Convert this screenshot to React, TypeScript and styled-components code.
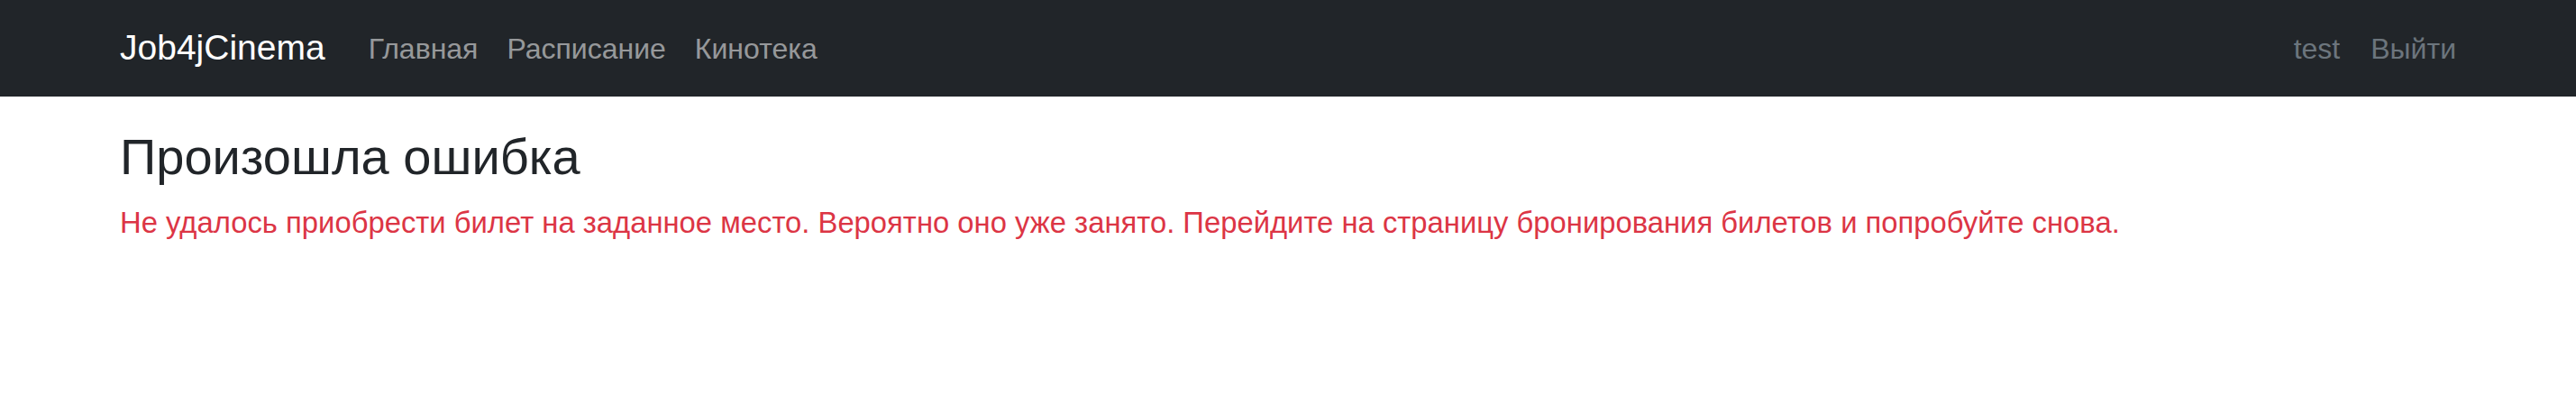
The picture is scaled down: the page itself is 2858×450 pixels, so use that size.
import React from "react";
import styled, { createGlobalStyle } from "styled-components";

const GlobalStyle = createGlobalStyle`
  * {
    box-sizing: border-box;
  }
  body {
    margin: 0;
    background: #fff;
    font-family: "Liberation Sans", Arial, sans-serif;
    color: #212529;
  }
`;

const links = ["Главная", "Расписание", "Кинотека"];

export default function App() {
  return (
    <>
      <GlobalStyle />
      <Navbar>
        <NavContainer>
          <Brand href="#">Job4jCinema</Brand>
          <NavList>
            {links.map((link) => (
              <NavLink key={link} href="#">
                {link}
              </NavLink>
            ))}
          </NavList>
          <UserNav>
            <UserLink href="#">test</UserLink>
            <UserLink href="#">Выйти</UserLink>
          </UserNav>
        </NavContainer>
      </Navbar>
      <Main>
        <Title>Произошла ошибка</Title>
        <ErrorText>
          Не удалось приобрести билет на заданное место. Вероятно оно уже
          занято. Перейдите на страницу бронирования билетов и попробуйте снова.
        </ErrorText>
      </Main>
    </>
  );
}

const Navbar = styled.nav`
  background: #212529;
  height: 107px;
`;

const Container = styled.div`
  max-width: 2640px;
  margin: 0 auto;
  padding: 0 24px;
`;

const NavContainer = styled(Container)`
  display: flex;
  align-items: center;
  height: 100%;
`;

const Brand = styled.a`
  font-size: 39px;
  color: #fff;
  text-decoration: none;
  margin-right: 32px;
  line-height: 1.5;
`;

const NavList = styled.div`
  display: flex;
  align-items: center;
`;

const NavLink = styled.a`
  font-size: 32px;
  line-height: 1.5;
  padding: 0 16px;
  color: rgba(255, 255, 255, 0.55);
  text-decoration: none;
`;

const UserNav = styled.div`
  display: flex;
  align-items: center;
  gap: 34px;
  margin-left: auto;
`;

const UserLink = styled.a`
  font-size: 32px;
  line-height: 1.5;
  color: #6c757d;
  text-decoration: none;
`;

const Main = styled(Container)`
  padding-top: 33px;
`;

const Title = styled.h1`
  margin: 0 0 15px;
  font-size: 56px;
  font-weight: 500;
  line-height: 1.2;
  color: #212529;
`;

const ErrorText = styled.p`
  margin: 0;
  font-size: 32.8px;
  line-height: 1.5;
  color: #dc3545;
`;
